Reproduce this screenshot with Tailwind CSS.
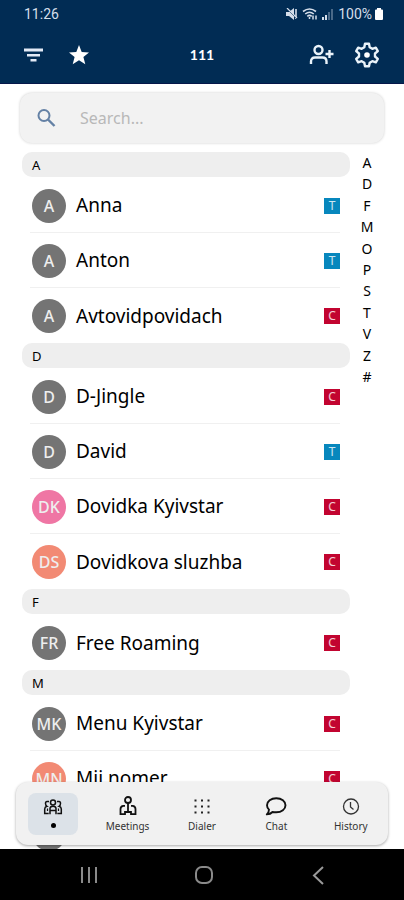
<!DOCTYPE html>
<html lang="en">

<head>
    <meta charset="UTF-8">
    <meta name="viewport" content="width=device-width, initial-scale=1.0">
    <title>Contacts</title>
    <script src="https://cdn.jsdelivr.net/npm/@tailwindcss/browser@4"></script>
</head>

<body class="bg-white text-black font-['Noto_Sans','Liberation_Sans',sans-serif] flex flex-col h-screen overflow-hidden">

    <!-- Header -->
    <header class="bg-[#012c54] text-white border-b border-[#06174a] shrink-0">
        <div class="flex items-center justify-between h-7 pl-6 pr-5 text-[#d5deea] font-[Roboto,sans-serif] text-sm">
            <span>11:26</span>
            <div class="flex items-center gap-1">
                <svg class="w-3 h-3" viewBox="0 0 12 12" fill="currentColor">
                    <path d="M0 4h3l5-4v12L3 8H0z" />
                    <path d="M10 1v10" stroke="currentColor" stroke-width="1.6" />
                    <path d="M0 0l11 11" stroke="#012c54" stroke-width="1" />
                    <path d="M1 0l10 10" stroke="currentColor" stroke-width="1.2" />
                </svg>
                <svg class="w-4 h-3" viewBox="0 0 16 12" fill="none" stroke="currentColor" stroke-width="1.6">
                    <path d="M1 3.500Q7.500-1.500 14 3.500M3.200 6Q7.500 2.500 11.800 6M5.300 8.300Q7.500 6.500 9.700 8.300" />
                    <path d="M7.500 9v2M11 7.500v4M14 11.500v-4" stroke-width="1.5" />
                </svg>
                <svg class="w-3 h-3" viewBox="0 0 12 12" fill="currentColor">
                    <path d="M0 12V9h2v3zM3 12V7h2v5z" />
                    <path d="M6 12V4h2v8zM9 12V1h2v11z" opacity=".35" />
                </svg>
                <span class="flex items-center gap-0.5">100%
                    <svg class="w-2.5 h-3" viewBox="0 0 10 12" fill="#fff">
                        <path d="M3 0h4v1.500h1q1 0 1 1V11q0 1-1 1h-6q-1 0-1-1V2.500q0-1 1-1H3z" />
                    </svg>
                </span>
            </div>
        </div>
        <div class="grid grid-cols-3 items-center h-[55px] px-5 pb-0.5">
            <div class="flex items-center gap-5">
                <button aria-label="Filter">
                    <svg class="w-[26px] h-[26px]" viewBox="0 0 26 26" fill="#e3eaf6">
                        <path d="M4 6.500h19v3H4zM7 12h13v2.500H7zM10.500 17h6v2.500h-6z" />
                    </svg>
                </button>
                <button aria-label="Favorites">
                    <svg class="w-[26px] h-[26px]" viewBox="0 0 26 26" fill="#fff">
                        <path d="M13 3l2.700 6.900 7.300.5-5.600 4.600 1.900 7.200L13 18.200l-6.300 4 1.900-7.200L3 10.400l7.300-.5z" />
                    </svg>
                </button>
            </div>
            <h1 class="text-center text-sm font-bold font-[Lato,sans-serif]">111</h1>
            <div class="flex items-center justify-end gap-5 pr-1">
                <button aria-label="Add contact">
                    <svg class="w-[26px] h-[26px]" viewBox="0 0 26 26" fill="none" stroke="#eaf3fa" stroke-width="2.400">
                        <circle cx="10.500" cy="8" r="4" />
                        <path d="M3 22v-2.500q0-4 4-4h7.500q4 0 4 4V22M17.500 12h8M21.500 8v8" />
                    </svg>
                </button>
                <button aria-label="Settings">
                    <svg class="w-[26px] h-[26px]" viewBox="0 0 26 26" fill="none" stroke="#eaf3fa" stroke-width="2.400" stroke-linejoin="round">
                        <path d="M11 1.700h4l.7 3.600 2.600 1.500 3.500-1.200 2 3.500-2.800 2.400v3l2.800 2.400-2 3.500-3.500-1.200-2.600 1.500-.7 3.600h-4l-.7-3.600-2.600-1.500-3.500 1.200-2-3.500L5 14.500v-3L2.200 9.100l2-3.500 3.500 1.200 2.600-1.500z" />
                        <circle cx="13" cy="13" r="2.800" fill="#fff" stroke="none" />
                    </svg>
                </button>
            </div>
        </div>
    </header>

    <main class="relative flex-1 overflow-hidden pt-[9px]">
        <!-- Search -->
        <label class="mx-5 mb-[9px] flex items-center h-[50px] px-4 gap-6 rounded-xl bg-[#f2f2f2] shadow-[0_0_3px_rgba(0,0,0,0.2)]">
            <svg class="w-5 h-5 shrink-0" viewBox="0 0 20 20" fill="none" stroke="#6481a5" stroke-width="2">
                <circle cx="8" cy="7.500" r="5.500" />
                <path d="M12 11.500l6.500 6.500" stroke-width="2.400" />
            </svg>
            <input type="text" aria-label="Search" placeholder="Search..." class="flex-1 min-w-0 bg-transparent text-base placeholder:text-[#b8b8b8] outline-none">
        </label>

        <div class="flex">
            <!-- Contacts -->
            <div id="contacts" class="flex-1 pl-[22px]"></div>

            <!-- Letter index -->
            <nav aria-label="Letters" class="w-[54px] shrink-0 pr-5">
                <ul id="letters" class="flex flex-col items-center justify-between h-[235px] text-sm leading-[21px]"></ul>
            </nav>
        </div>

        <!-- Tab bar -->
        <nav aria-label="Tabs" class="absolute inset-x-4 bottom-1 h-[63px] grid grid-cols-5 rounded-xl bg-[#f1f1f1] shadow-[0_1px_3px_rgba(0,0,0,0.35)] text-[10px] leading-3 text-[#333]">
            <button aria-label="Contacts" class="flex flex-col items-center justify-center">
                <span class="flex flex-col items-center gap-2 w-[50px] h-[42px] pt-1.5 rounded-lg bg-[#dce2e8]">
                    <svg class="w-5 h-4" viewBox="0 0 20 16" fill="none" stroke="#111" stroke-width="1.500">
                        <circle cx="10" cy="3.500" r="2.500" />
                        <path d="M7 15.200V9.500q0-2.300 3-2.300t3 2.300v5.700M7 11.500h6" />
                        <path d="M6 2.500H4Q2.500 2.500 2.500 4.500T4 7.300Q1.700 8 1.700 10v4.500h4M14 2.500h2q1.500 0 1.500 2T16 7.300q2.300.7 2.300 2.700v4.500h-4" />
                        <path d="M4.500 9.500v2.500M15.500 9.500v2.500" stroke-width="1.200" />
                    </svg>
                    <span class="w-[5px] h-[5px] rounded-full bg-black"></span>
                </span>
            </button>
            <button class="flex flex-col items-center justify-center gap-1">
                <svg class="w-5 h-5" viewBox="0 0 20 20" fill="none" stroke="#111" stroke-width="1.800">
                    <circle cx="10" cy="4" r="3" />
                    <path d="M10 7v9.500M7 9.800H5.500Q2.500 10 2.500 13v5.200h4.500V16h6v2.200h4.500V13q0-3-3-3.200H13" />
                </svg>
                Meetings
            </button>
            <button class="flex flex-col items-center justify-center gap-1">
                <svg class="w-5 h-5" viewBox="0 0 20 20" fill="#222">
                    <path d="M2.500 3.500h2v2h-2zM9 3.500h2v2H9zM15.500 3.500h2v2h-2zM2.500 9.500h2v2h-2zM9 9.500h2v2H9zM15.500 9.500h2v2h-2zM2.500 15.500h2v2h-2zM9 15.500h2v2H9zM15.500 15.500h2v2h-2z" />
                </svg>
                Dialer
            </button>
            <button class="flex flex-col items-center justify-center gap-1">
                <svg class="w-[22px] h-5" viewBox="0 0 22 20" fill="none" stroke="#111" stroke-width="1.900" stroke-linejoin="round">
                    <path d="M7.500 16Q5.500 18.200 1.800 18.400 4 16.500 4 13.600 2 11.800 2 9.300C2 5.400 6 2.200 11.300 2.200S20.500 5.400 20.500 9.300 16.600 16.300 11.300 16.300Q9.200 16.400 7.500 16z" />
                </svg>
                Chat
            </button>
            <button class="flex flex-col items-center justify-center gap-1">
                <svg class="w-5 h-5" viewBox="0 0 20 20" fill="none" stroke="#333" stroke-width="1.300">
                    <circle cx="10" cy="10.500" r="7.500" />
                    <path d="M9.500 6v5l3 2.500" />
                </svg>
                History
            </button>
        </nav>
    </main>

    <!-- System navigation -->
    <footer class="bg-black h-[51px] shrink-0 grid grid-cols-3 items-center pl-8 pr-7">
        <button aria-label="Recents" class="justify-self-center">
            <svg class="w-5 h-5" viewBox="0 0 20 20" stroke="#8a8a8a" stroke-width="2">
                <path d="M3 2v16M10 2v16M17 2v16" />
            </svg>
        </button>
        <button aria-label="Home" class="justify-self-center">
            <svg class="w-5 h-5" viewBox="0 0 20 20" fill="none" stroke="#8a8a8a" stroke-width="2">
                <rect x="2" y="2" width="16" height="16" rx="6" />
            </svg>
        </button>
        <button aria-label="Back" class="justify-self-center">
            <svg class="w-5 h-5" viewBox="0 0 20 20" fill="none" stroke="#9a9a9a" stroke-width="2">
                <path d="M14 2L5 10.500l9 8.500" />
            </svg>
        </button>
    </footer>

    <script>
        const gray = "bg-[#747474]";
        const pink = "bg-[#ef76a4]";
        const orange = "bg-[#f28a74]";
        const sections = [
            { letter: "A", items: [["A", "Anna", "T", gray], ["A", "Anton", "T", gray], ["A", "Avtovidpovidach", "C", gray]] },
            { letter: "D", items: [["D", "D-Jingle", "C", gray], ["D", "David", "T", gray], ["DK", "Dovidka Kyivstar", "C", pink], ["DS", "Dovidkova sluzhba", "C", orange]] },
            { letter: "F", items: [["FR", "Free Roaming", "C", gray]] },
            { letter: "M", items: [["MK", "Menu Kyivstar", "C", gray], ["MN", "Mii nomer", "C", orange], ["", "", "", gray]] }
        ];

        // Contact sections
        document.getElementById("contacts").innerHTML = sections.map(section => `
            <section>
                <h2 class="h-[25px] mb-px pl-2.5 rounded-[10px] bg-[#eeeeee] text-[13px] leading-[26px]">${section.letter}</h2>
                <ul class="ml-2 mr-2.5 divide-y divide-[#f0f0f0]">
                    ${section.items.map(([initials, name, badge, color]) => `
                        <li class="flex items-center h-[55px] pl-0.5 pt-px">
                            <span class="flex items-center justify-center w-[34px] h-[34px] rounded-full text-base font-medium text-[#eeeeee] ${color}">${initials}</span>
                            <span class="flex-1 pl-2.5 text-[19px]">${name}</span>
                            ${badge ? `<span class="flex items-center justify-center w-4 h-4 text-xs text-white/80 ${badge === "T" ? "bg-[#0787bd]" : "bg-[#c20430]"}">${badge}</span>` : ""}
                        </li>`).join("")}
                </ul>
            </section>`).join("");

        document.getElementById("letters").innerHTML = [..."ADFMOPSTVZ#"]
            .map(letter => `<li><a href="#">${letter}</a></li>`).join("");
    </script>

</body>

</html>
